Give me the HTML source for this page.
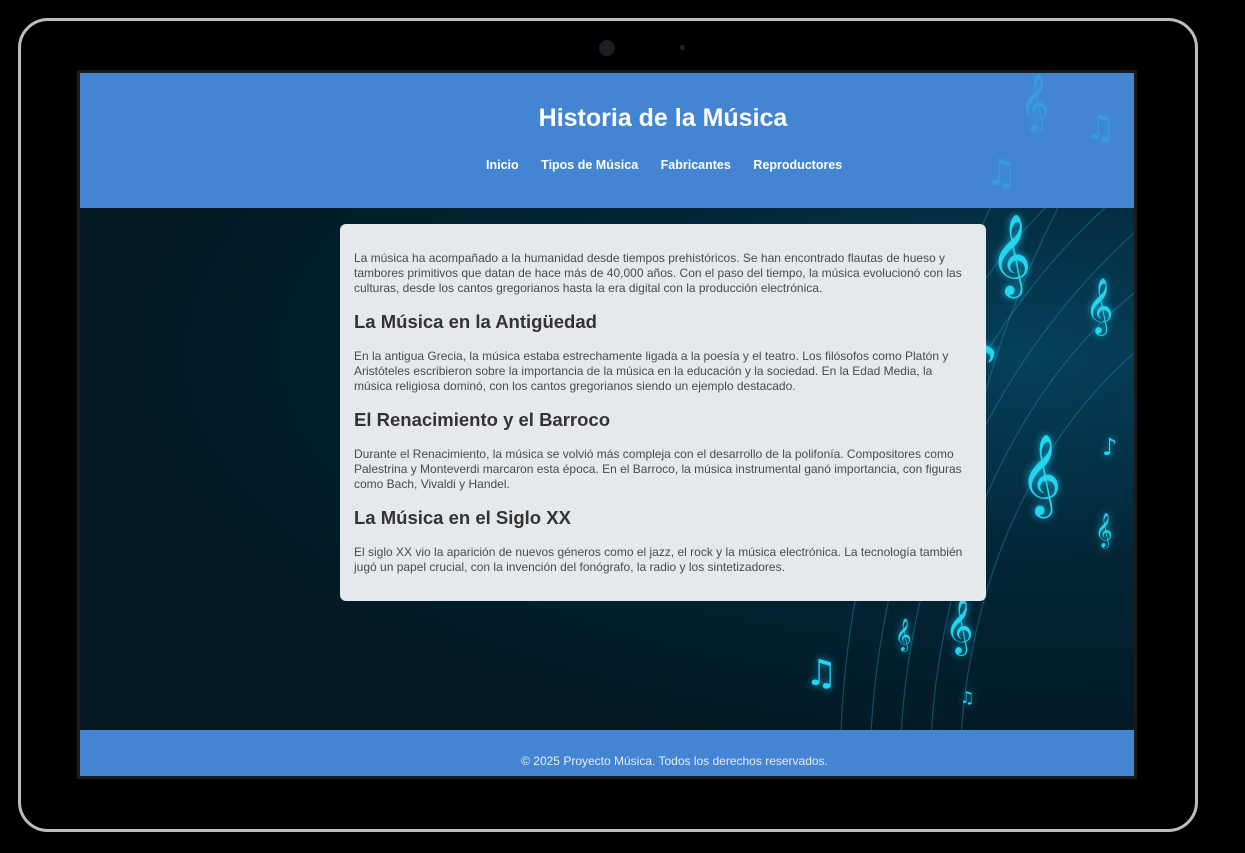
<!DOCTYPE html>
<html><head><meta charset="utf-8"><style>
*{margin:0;padding:0;box-sizing:border-box}
body{width:1245px;height:853px;background:#000;position:relative;overflow:hidden;font-family:"Liberation Sans",Arial,sans-serif}
.frame{position:absolute;left:18px;top:18px;width:1180px;height:814px;border:3px solid #bdbdbd;border-radius:30px;background:#000}
.screenb{position:absolute;left:77px;top:70px;width:1060px;height:709px;background:#1b1b1b}
.screen{position:absolute;left:80px;top:73px;width:1054px;height:703px;overflow:hidden;background:radial-gradient(ellipse at 90% 40%,#05405a 0%,#032536 35%,#021823 70%)}
.hdr{position:absolute;left:0;top:0;width:100%;height:135px;background:#4384d3;text-align:center;color:#fff}
.hdr h1{position:absolute;left:0;right:0;top:31px;margin-left:112px;font-size:25px;font-weight:bold}
.nav{position:absolute;top:85px;left:406px;font-size:12.5px;font-weight:bold;white-space:nowrap}
.nav span{margin-right:22.5px}
.ftr{position:absolute;left:0;bottom:0;width:100%;height:46px;background:#4384d3;color:#e8eef8;font-size:12px;text-align:center;padding-top:24px;padding-left:135px}
.box{position:absolute;left:260px;top:151px;width:646px;height:377px;background:#e6e9eb;border-radius:6px;padding:27px 15px 0 14px;color:#4a4a4a;font-size:12px;line-height:15px}
.box h2{font-size:18.5px;color:#333;margin:15px 0 16px;line-height:22px}
.n{position:absolute;color:#23d5ee;text-shadow:0 0 8px #1bb8e0;font-family:"DejaVu Sans",sans-serif}
svg{position:absolute;left:0;top:0}
</style></head><body>
<div class="frame"></div>
<div class="screenb"></div>
<div class="screen">
<svg width="1054" height="703"><g fill="none" stroke="#1c8fb8" stroke-opacity=".45" stroke-width="1.2">
<path d="M1054 60 C850 200 760 450 760 703"/><path d="M1054 110 C880 250 790 480 790 703"/><path d="M1054 160 C900 300 820 500 820 703"/><path d="M1054 220 C920 330 850 520 850 703"/><path d="M1054 280 C940 380 880 540 880 703"/>
<path d="M1000 0 C900 120 880 200 860 300"/><path d="M1054 0 C960 150 920 260 900 340"/></g></svg>
<div class="n" style="left:910px;top:140px;font-size:70px">𝄞</div>
<div class="n" style="left:1005px;top:205px;font-size:48px">𝄞</div>
<div class="n" style="left:870px;top:250px;font-size:80px">♪</div>
<div class="n" style="left:940px;top:360px;font-size:70px">𝄞</div>
<div class="n" style="left:1015px;top:440px;font-size:30px">𝄞</div>
<div class="n" style="left:865px;top:525px;font-size:48px">𝄞</div>
<div class="n" style="left:815px;top:545px;font-size:28px">𝄞</div>
<div class="n" style="left:725px;top:580px;font-size:36px">♫</div>
<div class="n" style="left:1022px;top:360px;font-size:24px">♪</div>
<div class="n" style="left:880px;top:615px;font-size:16px">♫</div>
<div class="hdr"><h1>Historia de la Música</h1>
<div class="nav"><span>Inicio</span><span>Tipos de Música</span><span>Fabricantes</span><span>Reproductores</span></div>
<div class="n" style="left:940px;top:0;font-size:50px;opacity:.3">𝄞</div>
<div class="n" style="left:1005px;top:35px;font-size:34px;opacity:.3">♫</div>
<div class="n" style="left:905px;top:80px;font-size:36px;opacity:.3">♫</div>
</div>
<div class="box">
<p>La música ha acompañado a la humanidad desde tiempos prehistóricos. Se han encontrado flautas de hueso y tambores primitivos que datan de hace más de 40,000 años. Con el paso del tiempo, la música evolucionó con las culturas, desde los cantos gregorianos hasta la era digital con la producción electrónica.</p>
<h2>La Música en la Antigüedad</h2>
<p>En la antigua Grecia, la música estaba estrechamente ligada a la poesía y el teatro. Los filósofos como Platón y Aristóteles escribieron sobre la importancia de la música en la educación y la sociedad. En la Edad Media, la música religiosa dominó, con los cantos gregorianos siendo un ejemplo destacado.</p>
<h2>El Renacimiento y el Barroco</h2>
<p>Durante el Renacimiento, la música se volvió más compleja con el desarrollo de la polifonía. Compositores como Palestrina y Monteverdi marcaron esta época. En el Barroco, la música instrumental ganó importancia, con figuras como Bach, Vivaldi y Handel.</p>
<h2>La Música en el Siglo XX</h2>
<p>El siglo XX vio la aparición de nuevos géneros como el jazz, el rock y la música electrónica. La tecnología también jugó un papel crucial, con la invención del fonógrafo, la radio y los sintetizadores.</p>
</div>
<div class="ftr">© 2025 Proyecto Música. Todos los derechos reservados.</div>
</div>
<div style="position:absolute;left:599px;top:40px;width:16px;height:16px;border-radius:50%;background:#1a1d22"></div>
<div style="position:absolute;left:680px;top:45px;width:5px;height:5px;border-radius:50%;background:#222"></div>
</body></html>
